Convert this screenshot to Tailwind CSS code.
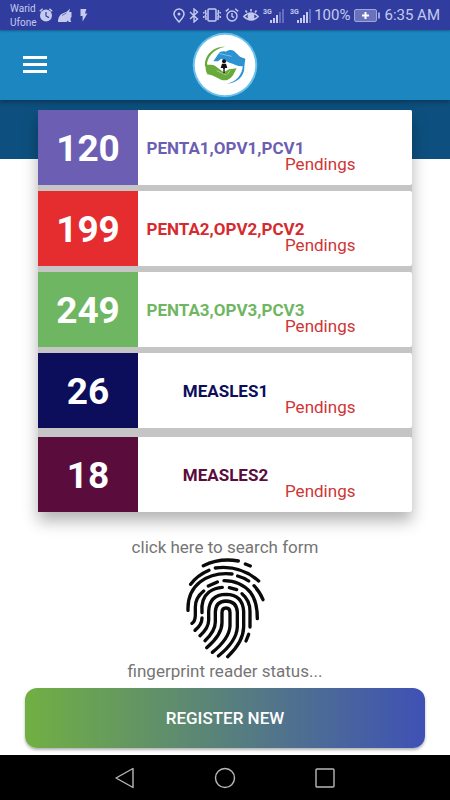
<!DOCTYPE html>
<html lang="en">
<head>
  <meta charset="UTF-8" />
  <meta name="viewport" content="width=device-width, initial-scale=1.0"/>
  <title>Pendings</title>
  <script src="https://cdn.jsdelivr.net/npm/@tailwindcss/browser@4"></script>
</head>
<body class="min-h-screen flex flex-col bg-white font-[Roboto,sans-serif]">

  <!-- Status bar -->
  <div class="h-[30px] shrink-0 bg-[#303d9f] text-[#c5caee] flex items-center justify-between px-[10px] relative z-20 shadow-[0_1px_2px_rgba(0,0,0,0.3)]">
    <div class="flex items-center">
      <div class="text-[10px] leading-[14px] pt-[2px] w-[29px]">Warid<br>Ufone</div>
      <svg class="w-[14px] h-[14px]" viewBox="0 0 14 14" fill="none">
        <circle cx="7" cy="7.5" r="6" fill="currentColor"/>
        <path d="M.8 3.2 3.6.8M13.2 3.2 10.4.8" stroke="currentColor" stroke-width="1.4"/>
        <path d="M7 4v4l3 1.6" stroke="#303d9f" stroke-width="1.2"/>
      </svg>
      <svg class="ml-[5px] w-[14px] h-[14px]" viewBox="0 0 14 14" fill="currentColor">
        <path d="M0 14C0 9.500 2 6.500 4.500 5.500L9 3.500 12 .5 11.200 4H13.500V9L12.600 10V13L13.500 14H10.800L9.800 12.600 8.600 14Z"/>
        <path d="M4 7.500 8.500 5" stroke="#303d9f" stroke-width=".6"/>
      </svg>
      <svg class="ml-[8px] w-[8px] h-[13px]" viewBox="0 0 8 13" fill="currentColor"><path d="M.5 0H6.4L5 4.4H7.4L2.6 12.6V7H.5Z"/></svg>
    </div>
    <div class="flex items-center gap-[4px]">
      <svg class="w-[12px] h-[15px]" viewBox="0 0 12 15" fill="none" stroke="currentColor" stroke-width="1.5">
        <path d="M6 14C3.4 11 1 8.600 1 6a5 5 0 0 1 10 0c0 2.600-2.400 5-5 8Z"/>
        <circle cx="6" cy="6" r="1.5" fill="currentColor" stroke="none"/>
      </svg>
      <svg class="w-[10px] h-[15px]" viewBox="0 0 10 15" fill="none" stroke="currentColor" stroke-width="1.4"><path d="M1 4l7.500 7L5 14V1l3.500 3L1 11"/></svg>
      <svg class="w-[18px] h-[14px]" viewBox="0 0 18 14" fill="none" stroke="currentColor" stroke-width="1.500">
        <rect x="5" y="1" width="8" height="12" rx="1"/>
        <path d="M2.600 2v2.500L3.200 6 2.400 7.500 3 9v3M.8 4v1.500M.8 8v2M15.400 2v2.500L14.800 6l.8 1.500L15 9v3M17.200 4v1.500M17.200 8v2"/>
      </svg>
      <svg class="w-[14px] h-[14px]" viewBox="0 0 14 14" fill="none" stroke="currentColor" stroke-width="1.400">
        <circle cx="7" cy="8" r="5"/><path d="M.8 3.400 3.800.8M13.200 3.400 10.200.8M7 5v3.300l2 1.300"/>
      </svg>
      <svg class="w-[16px] h-[14px]" viewBox="0 0 16 14" fill="none" stroke="currentColor" stroke-width="1.600">
        <path d="M.8 8.500Q8 1.500 15.200 8.500Q8 15.500.8 8.500ZM2.500 2.400 4 4.400M8 1v2.500M13.500 2.400 12 4.400"/>
        <circle cx="8" cy="8.500" r="2.600" fill="currentColor"/>
      </svg>
      <svg class="w-[23px] h-[15px]" viewBox="0 0 23 15" fill="currentColor">
        <text x="0" y="6" font-size="7" font-weight="700">3G</text>
        <path d="M7 12h2v3H7zM10 10h2v5h-2zM13 7h2v8h-2z"/><path opacity=".35" d="M16 4h2v11h-2zM19 1h2v14h-2z"/>
      </svg>
      <div class="flex items-center gap-px">
        <svg class="w-[23px] h-[15px]" viewBox="0 0 23 15" fill="currentColor">
          <text x="0" y="6" font-size="7" font-weight="700">3G</text>
          <path d="M7 12h2v3H7zM10 10h2v5h-2zM13 7h2v8h-2zM16 4h2v11h-2z"/><path opacity=".35" d="M19 1h2v14h-2z"/>
        </svg>
        <span class="text-[15px] leading-5">100%</span>
      </div>
      <svg class="w-[26px] h-[13px]" viewBox="0 0 26 13" fill="none">
        <rect x=".5" y=".5" width="22" height="12" rx="1.500" stroke="currentColor" stroke-opacity=".7" fill="#6872bd"/>
        <path d="M11.500 3v7M8 6.500h7" stroke="#fff" stroke-width="2"/><path d="M25 3.500v6" stroke="currentColor" stroke-width="1.500"/>
      </svg>
      <span class="text-[15px] leading-5">6:35 AM</span>
    </div>
  </div>

  <!-- App bar -->
  <header class="h-[70px] shrink-0 bg-[#1b86c0] relative z-10 shadow-[0_2px_5px_rgba(0,0,0,0.35)] grid grid-cols-3 items-center">
    <button type="button" aria-label="Menu" class="ml-[23px] w-6 text-white">
      <svg class="w-6 h-[18px]" viewBox="0 0 24 18" fill="currentColor"><path d="M0 0h24v3H0zM0 7h24v3H0zM0 14h24v3H0z"/></svg>
    </button>
    <svg class="justify-self-center w-[66px] h-[66px]" viewBox="0 0 198 198">
      <circle cx="99" cy="99" r="97" fill="#6cc0ea"/>
      <circle cx="99" cy="99" r="91" fill="#fff"/>
      <path d="M100 44C66 42 36 68 39 103L44 105C44 74 64 51 100 44Z" fill="#69aa3c"/>
      <path d="M156 96C162 126 140 155 101 155C132 151 151 130 153 98Z" fill="#2c92d2"/>
      <path d="M64 88L79 66C83 58 95 57 101 59C109 53 119 52 126 57L144 74L160 80L157 102C140 106 128 96 112 92L88 80L78 88Z" fill="#2c92d2"/>
      <path d="M41 97C53 100 62 97 70 102L95 121L111 112L134 109L125 126C117 141 104 149 87 143C75 139 70 131 46 127C41 118 40 106 41 97Z" fill="#69aa3c"/>
      <path d="M83 65L119 73M74 116L102 129M115 115L105 128" stroke="#fff" stroke-width="2" opacity=".6"/>
      <circle cx="96" cy="88" r="6" fill="#111"/>
      <path d="M90 95H102L106 108H99V124H97V110H95V124H93V108H86Z" fill="#111"/>
    </svg>
  </header>

  <main class="grow bg-linear-to-b from-[#0d507f] from-[59px] to-white to-[59px] pt-[10px] flex flex-col items-center">
    <!-- Pending vaccines -->
    <ul class="self-stretch mx-[38px] flex flex-col gap-[6px] rounded-[2px] bg-[#c5c5c5] shadow-[0_9px_16px_rgba(0,0,0,0.3)]">
      <li class="h-[75px] flex rounded-r-[2px] overflow-hidden bg-white">
        <div class="w-[100px] pt-[3px] bg-[#6c5fb3] text-white text-[37px] font-bold flex items-center justify-center">120</div>
        <div class="pt-[30px] text-[17px] leading-4">
          <p class="w-[175px] text-center font-bold text-[#6c5fb3]">PENTA1,OPV1,PCV1</p>
          <p class="ml-[147px] text-[#cf3535]">Pendings</p>
        </div>
      </li>
      <li class="h-[75px] flex rounded-r-[2px] overflow-hidden bg-white">
        <div class="w-[100px] pt-[3px] bg-[#e52d30] text-white text-[37px] font-bold flex items-center justify-center">199</div>
        <div class="pt-[30px] text-[17px] leading-4">
          <p class="w-[175px] text-center font-bold text-[#d62a2e]">PENTA2,OPV2,PCV2</p>
          <p class="ml-[147px] text-[#cf3535]">Pendings</p>
        </div>
      </li>
      <li class="h-[75px] flex rounded-r-[2px] overflow-hidden bg-white">
        <div class="w-[100px] pt-[3px] bg-[#6fb662] text-white text-[37px] font-bold flex items-center justify-center">249</div>
        <div class="pt-[30px] text-[17px] leading-4">
          <p class="w-[175px] text-center font-bold text-[#6fb662]">PENTA3,OPV3,PCV3</p>
          <p class="ml-[147px] text-[#cf3535]">Pendings</p>
        </div>
      </li>
      <li class="h-[75px] flex rounded-r-[2px] overflow-hidden bg-white">
        <div class="w-[100px] pt-[3px] bg-[#0c0e5b] text-white text-[37px] font-bold flex items-center justify-center">26</div>
        <div class="pt-[30px] text-[17px] leading-4">
          <p class="w-[175px] text-center font-bold text-[#0c0e5b]">MEASLES1</p>
          <p class="ml-[147px] text-[#cf3535]">Pendings</p>
        </div>
      </li>
      <li class="mt-[3px] h-[75px] flex rounded-r-[2px] overflow-hidden bg-white">
        <div class="w-[100px] pt-[3px] bg-[#5a0d3c] text-white text-[37px] font-bold flex items-center justify-center">18</div>
        <div class="pt-[30px] text-[17px] leading-4">
          <p class="w-[175px] text-center font-bold text-[#5a0d3c]">MEASLES2</p>
          <p class="ml-[147px] text-[#cf3535]">Pendings</p>
        </div>
      </li>
    </ul>

    <!-- Fingerprint search -->
    <button type="button" class="mt-[25px] flex flex-col items-center text-[17px] leading-5 text-[#757575]">
      <span>click here to search form</span>
      <svg class="w-[80px] h-[102px]" viewBox="45 65 240 306" fill="none" stroke="#0a0a0a" stroke-width="10" stroke-linecap="round">
        <path d="M100 91Q150 67 205 77M226 86L241 92"/>
        <path d="M62 147Q82 120 117 105M136 98Q210 88 266 137"/>
        <path d="M54 225Q52 170 90 140Q130 110 186 116M203 122Q222 127 236 137M252 151Q270 170 279 193"/>
        <path d="M66 264Q76 258 76 238V215Q76 187 101 167M115 152L142 140M162 136Q212 136 242 172Q262 198 262 250"/>
        <path d="M75 285Q96 268 96 248M96 232Q92 190 117 170Q135 157 157 156M178 157L200 163M216 175Q240 195 240 228V275M236 297L228 317"/>
        <path d="M90 301Q116 278 116 255V228Q118 178 168 177Q218 178 221 228V275Q220 320 173 364"/>
        <path d="M105 316Q136 287 136 260V230Q137 198 168 197Q200 198 202 230V275Q200 318 145 362"/>
        <path d="M110 337Q156 298 156 262V232Q156 218 168 218Q180 218 180 232V272Q178 310 127 351"/>
      </svg>
    </button>
    <p class="mt-[2px] text-[17px] leading-5 text-[#757575]">fingerprint reader status...</p>

    <div class="self-stretch px-[25px] py-[7px]">
      <button type="button" class="w-full h-[60px] pt-[2px] rounded-[12px] bg-linear-to-r/srgb from-[#71b043] to-[#3f51b5] text-white text-[17px] font-medium shadow-[0_2px_3px_rgba(0,0,0,0.3)]">REGISTER NEW</button>
    </div>
  </main>

  <!-- Navigation bar -->
  <nav class="h-[45px] shrink-0 bg-black text-[#b8b8b8] flex items-center justify-center gap-[78px]">
    <button type="button" aria-label="Back">
      <svg class="w-[22px] h-[22px]" viewBox="0 0 22 22" fill="none" stroke="currentColor" stroke-width="1.400" stroke-linejoin="round"><path d="M19 1.500V20.500L2 11Z"/></svg>
    </button>
    <button type="button" aria-label="Home">
      <svg class="w-[22px] h-[22px]" viewBox="0 0 22 22" fill="none" stroke="currentColor" stroke-width="1.400"><circle cx="11" cy="11" r="9.500"/></svg>
    </button>
    <button type="button" aria-label="Recent apps">
      <svg class="w-[22px] h-[22px]" viewBox="0 0 22 22" fill="none" stroke="currentColor" stroke-width="1.400"><rect x="2" y="2" width="18" height="18" rx="1"/></svg>
    </button>
  </nav>

</body>
</html>
